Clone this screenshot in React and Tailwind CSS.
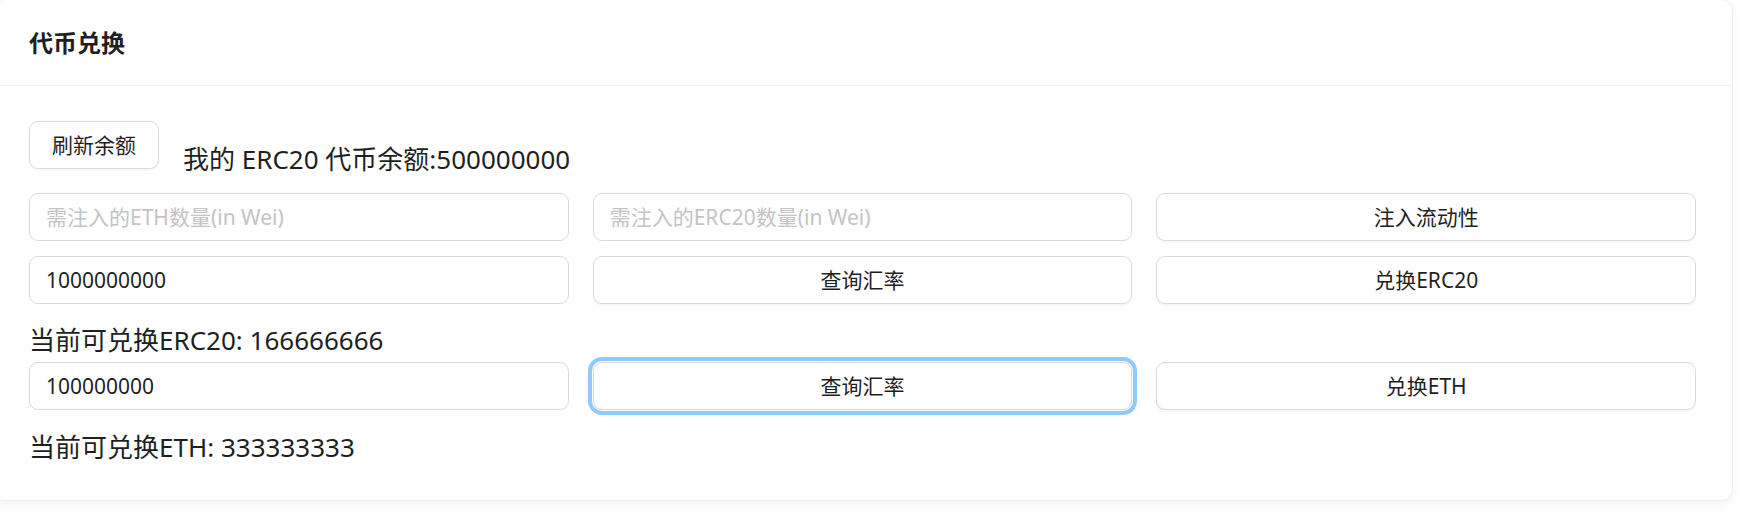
import React from "react";

const font = { fontFamily: '"Noto Sans", "Noto Sans CJK SC", sans-serif' };

function Input({ placeholder, value }) {
  return (
    <input
      readOnly
      placeholder={placeholder}
      defaultValue={value}
      className="h-[48px] w-full rounded-[9px] border border-[#d9d9d9] bg-white px-[16px] text-[21px] text-[#1f1f1f] outline-none placeholder:text-[#c4c4c4]"
      style={font}
    />
  );
}

function Btn({ children, focus, className = "" }) {
  return (
    <button
      className={
        "h-[48px] rounded-[9px] border border-[#d9d9d9] bg-white text-[21px] leading-none text-[#1f1f1f] shadow-[0_2px_0_rgba(0,0,0,0.03)] " +
        (focus ? "outline-4 outline-offset-1 outline-[#91caff] " : "") +
        className
      }
      style={font}
    >
      {children}
    </button>
  );
}

export default function App() {
  return (
    <div className="h-[512px] w-[1751px] overflow-hidden bg-white" style={font}>
      <div className="-ml-[8px] -mt-[1px] w-[1741px] rounded-[12px] border border-[#f0f0f0] bg-white shadow-[0_3px_8px_rgba(0,0,0,0.05)]">
        <div className="flex h-[86px] items-center border-b border-[#f0f0f0] px-[36px]">
          <span className="text-[24px] font-bold leading-none text-[#1f1f1f]" style={font}>
            代币兑换
          </span>
        </div>
        <div className="px-[36px] pb-[37px] pt-[35px]">
          <div className="flex items-start">
            <Btn className="w-[130px]">刷新余额</Btn>
            <span className="ml-[24px] mt-[22px] text-[26px] leading-[32px] text-[#1f1f1f]">
              我的 ERC20 代币余额:500000000
            </span>
          </div>
          <div className="mt-[18px] grid grid-cols-3 gap-x-[24px] gap-y-[15px]">
            <Input placeholder="需注入的ETH数量(in Wei)" />
            <Input placeholder="需注入的ERC20数量(in Wei)" />
            <Btn>注入流动性</Btn>
            <Input value="1000000000" />
            <Btn>查询汇率</Btn>
            <Btn>兑换ERC20</Btn>
          </div>
          <div className="mt-[20px] text-[26px] leading-[32px] text-[#1f1f1f]">
            当前可兑换ERC20: 166666666
          </div>
          <div className="mt-[6px] grid grid-cols-3 gap-x-[24px]">
            <Input value="100000000" />
            <Btn focus>查询汇率</Btn>
            <Btn>兑换ETH</Btn>
          </div>
          <div className="mt-[21px] text-[26px] leading-[32px] text-[#1f1f1f]">
            当前可兑换ETH: 333333333
          </div>
        </div>
      </div>
    </div>
  );
}
